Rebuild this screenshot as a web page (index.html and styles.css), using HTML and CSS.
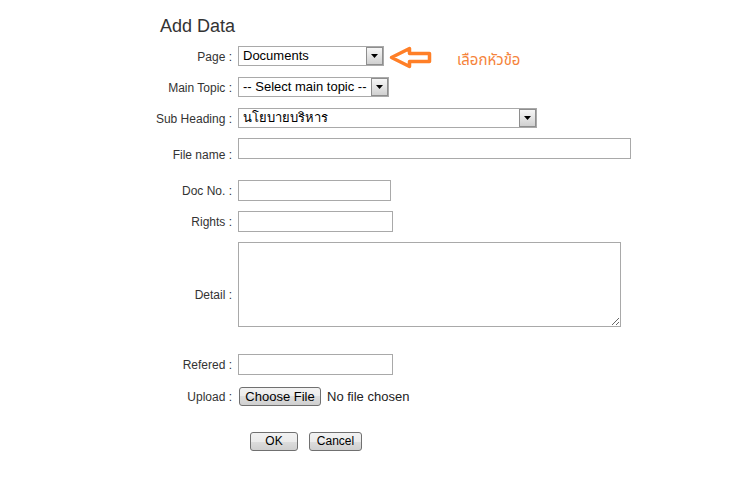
FILE: index.html
```html
<!DOCTYPE html>
<html lang="en">
<head>
<meta charset="utf-8">
<title>Add Data</title>
<link rel="stylesheet" href="styles.css">
</head>
<body>
<form class="form">
  <h2 class="title">Add Data</h2>

  <div class="row">
    <label class="label">Page :</label>
    <div class="field">
      <span class="select-wrap w-page"><select class="select"><option>Documents</option></select><span class="drop"></span></span>
      <svg class="hint-arrow" width="50" height="28" viewBox="0 0 50 28" aria-hidden="true"><path d="M5.5 15.5 L23.5 6.5 V11.5 H43.5 V19.5 H23.5 V24.5 Z" fill="#fff" stroke="#ff7f27" stroke-width="3.5" stroke-linejoin="round"/></svg>
      <span class="hint">เลือกหัวข้อ</span>
    </div>
  </div>

  <div class="row">
    <label class="label">Main Topic :</label>
    <div class="field">
      <span class="select-wrap w-main"><select class="select"><option>-- Select main topic --</option></select><span class="drop"></span></span>
    </div>
  </div>

  <div class="row">
    <label class="label">Sub Heading :</label>
    <div class="field">
      <span class="select-wrap w-sub"><select class="select"><option>นโยบายบริหาร</option></select><span class="drop"></span></span>
    </div>
  </div>

  <div class="row row-name">
    <label class="label">File name :</label>
    <div class="field"><input class="text w-name" type="text"></div>
  </div>

  <div class="row row-doc">
    <label class="label">Doc No. :</label>
    <div class="field"><input class="text w-doc" type="text"></div>
  </div>

  <div class="row row-rights">
    <label class="label">Rights :</label>
    <div class="field"><input class="text w-rights" type="text"></div>
  </div>

  <div class="row row-detail">
    <label class="label">Detail :</label>
    <div class="field"><textarea class="area"></textarea></div>
  </div>

  <div class="row row-ref">
    <label class="label">Refered :</label>
    <div class="field"><input class="text w-ref" type="text"></div>
  </div>

  <div class="row row-upload">
    <label class="label">Upload :</label>
    <div class="field">
      <button type="button" class="btn btn-file">Choose File</button>
      <span class="file-status">No file chosen</span>
    </div>
  </div>

  <div class="row row-actions">
    <span class="label"></span>
    <div class="field actions">
      <button type="button" class="btn btn-ok">OK</button>
      <button type="button" class="btn btn-cancel">Cancel</button>
    </div>
  </div>
</form>
</body>
</html>
```

FILE: styles.css
```css
* { box-sizing: border-box; }

body {
  margin: 0;
  background: #fff;
  font-family: "Liberation Sans", Arial, sans-serif;
  color: #333;
}

.form {
  margin-left: 144px;
  padding-top: 16px;
  width: 500px;
}

.title {
  margin: 0 0 4px;
  padding-left: 16px;
  font-size: 18px;
  line-height: 21px;
  font-weight: normal;
  color: #333;
}

.row {
  display: grid;
  grid-template-columns: 88px 1fr;
  column-gap: 6px;
  align-items: center;
  padding: 5px 0 6px;
}

.label {
  padding-top: 2px;
  text-align: right;
  font-size: 12px;
  line-height: 15px;
  color: #333;
  white-space: nowrap;
}

.field {
  display: flex;
  align-items: center;
}

/* selects */
.select-wrap {
  position: relative;
  display: block;
  height: 20px;
  flex: none;
}
.w-page { width: 146px; }
.w-main { width: 151px; }
.w-sub { width: 299px; }

.select {
  -webkit-appearance: none;
  appearance: none;
  display: block;
  width: 100%;
  height: 20px;
  margin: 0;
  padding: 0 20px 0 4px;
  border: 1px solid #a9a9a9;
  border-radius: 0;
  background: #fff;
  font-family: "Liberation Sans", Arial, "Noto Sans", sans-serif;
  font-size: 13px;
  line-height: 18px;
  color: #000;
  outline: none;
}

.drop {
  position: absolute;
  top: 1px;
  right: 1px;
  bottom: 1px;
  width: 17px;
  border: 1px solid #8e8e8e;
  background: linear-gradient(#f6f6f6, #e4e4e4 50%, #d0d0d0);
  pointer-events: none;
  display: flex;
  align-items: center;
  justify-content: center;
}
.drop::after {
  content: "";
  width: 7px;
  height: 4px;
  background: #000;
  clip-path: polygon(0 0, 100% 0, 50% 100%);
}

.hint-arrow {
  flex: none;
  margin: -4px 0 -4px 2px;
  display: block;
}

.hint {
  margin: 5px 0 -5px 21px;
  font-family: Tahoma, "Noto Sans Thai", "Noto Sans", "DejaVu Sans", sans-serif;
  font-size: 15px;
  line-height: 18px;
  color: #f5833a;
  white-space: nowrap;
}

/* text inputs */
.text {
  display: block;
  height: 21px;
  margin: 0;
  padding: 1px 3px;
  border: 1px solid #a9a9a9;
  border-radius: 0;
  background: #fff;
  font-family: "Liberation Sans", Arial, sans-serif;
  font-size: 13px;
  outline: none;
}
.w-name { width: 393px; }
.w-doc { width: 153px; }
.w-rights { width: 155px; }
.w-ref { width: 155px; }

.area {
  display: block;
  width: 383px;
  height: 85px;
  margin: 0;
  padding: 2px 3px;
  border: 1px solid #a9a9a9;
  border-radius: 0;
  font-family: "Liberation Sans", Arial, sans-serif;
  font-size: 13px;
  resize: both;
  outline: none;
}

/* row spacing */
.row-name { padding: 4px 0 0; }
.row-name .field { padding-bottom: 11px; }
.row-doc { padding: 10px 0 5px; }
.row-rights { padding: 5px 0 5px; }
.row-detail { padding: 5px 0 0; }
.row-detail .field { padding-bottom: 19px; }
.row-ref { padding: 8px 0 3px; }
.row-upload { padding: 9px 0 0; }
.row-actions { padding: 26px 0 0; }

/* buttons */
.btn {
  display: block;
  height: 19px;
  margin: 0;
  padding: 0;
  border: 1px solid #707070;
  border-radius: 3px;
  background: linear-gradient(#f2f2f2 0%, #ebebeb 50%, #dddddd 50%, #cfcfcf 100%);
  font-family: "Liberation Sans", Arial, sans-serif;
  font-size: 12px;
  line-height: 17px;
  color: #000;
  text-align: center;
}
.btn-file { width: 82px; margin-left: 1px; font-size: 13px; }
.btn-ok { width: 48px; }
.btn-cancel { width: 53px; margin-left: 11px; }

.actions { padding-left: 12px; }

.file-status {
  margin-left: 6px;
  font-size: 13px;
  line-height: 15px;
  color: #222;
  white-space: nowrap;
}
```
